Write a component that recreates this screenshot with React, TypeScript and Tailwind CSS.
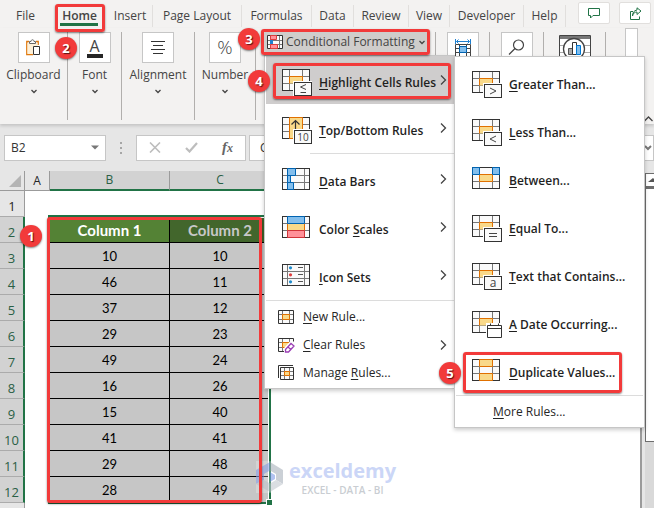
import React from 'react';

const UI_FONT = "font-['Open_Sans','Noto_Sans',sans-serif]";
const CELL_FONT = "font-['Lato','Open_Sans',sans-serif]";

const tabs = [
    { name: 'File', width: 'w-[51px]' },
    { name: 'Home', width: 'w-[57px]', active: true },
    { name: 'Insert', width: 'w-[45px]', line: true },
    { name: 'Page Layout', width: 'w-[89px]', line: true },
    { name: 'Formulas', width: 'w-[70px]', line: true },
    { name: 'Data', width: 'w-[42px]', line: true },
    { name: 'Review', width: 'w-[55px]', line: true },
    { name: 'View', width: 'w-[41px]', line: true },
    { name: 'Developer', width: 'w-[74px]', line: true },
    { name: 'Help', width: 'w-[42px]', line: true },
];

const rows = [
    [10, 10],
    [46, 11],
    [37, 12],
    [29, 23],
    [49, 24],
    [16, 26],
    [15, 40],
    [41, 41],
    [29, 48],
    [28, 49],
];

/* red outline and step number */

const Mark = ({ className }: { className: string }) => (
    <span className={`absolute z-30 border-[3px] border-[#f23a3a] rounded-[3px] shadow-[0_1px_2px_rgba(0,0,0,0.5)] pointer-events-none ${className}`} />
);

const Step = ({ n, className }: { n: number; className: string }) => (
    <span className={`absolute z-40 flex items-center justify-center w-[22px] h-[22px] rounded-full bg-[#f23a3a] text-white text-[13px] leading-none font-bold shadow-[0_1px_2px_rgba(0,0,0,0.5)] [text-shadow:1px_1px_1px_#5a1010] ${className}`}>
        {n}
    </span>
);

/* icons */

const Chevron = () => (
    <svg className="shrink-0" width="8" height="5" viewBox="0 0 8 5" fill="none" stroke="#444" strokeWidth="1.3">
        <path d="M1.5 1L4 3.5L6.5 1" />
    </svg>
);

const ArrowRight = () => (
    <svg width="7" height="10" viewBox="0 0 7 10" fill="none" stroke="#444" strokeWidth="1.3">
        <path d="M1 0.5L5.5 5L1 9.5" />
    </svg>
);

const RuleIcon = ({ kind }: { kind: string }) => {
    const inner = kind === 'bars' || kind === 'scales' || kind === 'sets';
    const x1 = inner ? 5.5 : 7.5;
    const x2 = inner ? 22.5 : 20.5;
    return (
        <svg className="shrink-0 mr-[7px]" width="30" height="27" viewBox="0 0 30 27" fill="none">
            <rect x="0.5" y="0.5" width="27" height="21" fill="#fafafa" />
            <path d={`M${x1} 1V21M${x2} 1V21M1 7.5H27M1 14.5H27`} stroke="#777" />
            <rect x="0.5" y="0.5" width="27" height="21" stroke="#333" />
            {(kind === '≤' || kind === '>' || kind === '<' || kind === '=' || kind === 'a' || kind === 'date' || kind === 'between') && (
                <path d="M7.5 7.5H20.5V14.5H7.5Z" fill="#f9d989" />
            )}
            {(kind === '≤' || kind === '>' || kind === '<' || kind === '=' || kind === 'a' || kind === 'date') && (
                <path d="M7.5 14.5V7.5H20.5V14.5" stroke="#e07000" />
            )}
            {kind === 'between' && (
                <>
                    <path d="M7.5 7.5H20.5V14.5H7.5Z" stroke="#e07000" />
                    <path d="M0.5 0.5H7.5V7.5H0.5ZM20.5 0.5H27.5V7.5H20.5Z" fill="#83beec" stroke="#0063b1" />
                </>
            )}
            {kind === 'top' && (
                <>
                    <path d="M7.5 0.5H20.5V21.5H7.5Z" fill="#f9d989" stroke="#e07000" />
                    <path d="M13.5 13V3.5M9.5 7.5L13.5 3.5L17.5 7.5" stroke="#333" strokeWidth="1.2" />
                </>
            )}
            {kind === 'dup' && (
                <path d="M7.5 0.5H20.5V7.5H7.5ZM7.5 14.5H20.5V21.5H7.5Z" fill="#f9d989" stroke="#e07000" />
            )}
            {kind === 'bars' && (
                <path d="M5.5 0.5H13.5V7.5H5.5ZM5.5 7.5H8.5V14.5H5.5ZM5.5 14.5H11.5V21.5H5.5Z" fill="#83beec" stroke="#0063b1" />
            )}
            {kind === 'scales' && (
                <>
                    <path d="M5.5 7.5H22.5V14.5H5.5Z" fill="#f9d989" stroke="#e07000" />
                    <path d="M5.5 0.5H22.5V7.5H5.5Z" fill="#83beec" stroke="#0063b1" />
                    <path d="M5.5 14.5H22.5V21.5H5.5Z" fill="#ff9199" stroke="#d13438" />
                </>
            )}
            {kind === 'sets' && (
                <>
                    <circle cx="8.5" cy="3.8" r="1.6" fill="#1e8bcd" />
                    <circle cx="8.5" cy="10.8" r="1.6" fill="#e03c3c" />
                    <circle cx="8.5" cy="17.8" r="1.6" fill="#1e8bcd" />
                    <path d="M16 3.5H21M16 10.5H21M16 17.5H21" stroke="#555" />
                </>
            )}
            {(kind === '≤' || kind === '>' || kind === '<' || kind === '=' || kind === 'a' || kind === 'top') && (
                <>
                    <path d="M11 12H30V27H11Z" fill="#fff" />
                    <rect x="12.5" y="13.5" width="17" height="13" fill="#fafafa" stroke="#333" />
                </>
            )}
            {kind === '≤' && <path d="M24 15.5L18.5 18L24 20.5M18.5 23.5H24" stroke="#444" />}
            {kind === '>' && <path d="M18 17L24 20L18 23" stroke="#444" />}
            {kind === '<' && <path d="M24 17L18 20L24 23" stroke="#444" />}
            {kind === '=' && <path d="M17 18.5H25M17 21.5H25" stroke="#444" />}
            {kind === 'a' && <text x="21" y="24" textAnchor="middle" fontSize="12" fontWeight="400" fill="#444">a</text>}
            {kind === 'top' && <text x="21" y="24" textAnchor="middle" fontSize="10" fontWeight="400" fill="#444">10</text>}
            {kind === 'date' && (
                <>
                    <path d="M14 12H30V27H14Z" fill="#fff" />
                    <path d="M15.5 14.5H29.5V26.5H15.5ZM15.5 17.5H29.5M18.5 12.5V15M26.5 12.5V15" stroke="#333" />
                </>
            )}
        </svg>
    );
};

const SmallRuleIcon = ({ kind }: { kind: string }) => (
    <svg className="shrink-0" width="17" height="16" viewBox="0 0 17 16" fill="none">
        {kind === 'manage' ? (
            <>
                <path d="M0.5 13V0.5H15" stroke="#333" />
                <path d="M2.5 2.5H15.5V14.5H2.5Z" fill="#fafafa" stroke="#333" />
                <path d="M6.5 3V14M11.5 3V14M3 6.5H15M3 10.5H15" stroke="#777" />
                <path d="M6.5 6.5H11.5V10.5H6.5Z" fill="#f9d989" stroke="#e07000" />
            </>
        ) : (
            <>
                <path d="M0.5 1.5H15.5V14.5H0.5Z" fill="#fafafa" stroke="#333" />
                <path d="M4.5 2V14M11.5 2V14M1 5.5H15M1 10.5H15" stroke="#777" />
                <path d="M4.5 5.5H11.5V10.5H4.5Z" fill="#f9d989" stroke="#e07000" />
            </>
        )}
        {kind === 'clear' && (
            <>
                <path d="M6 16L6 11L12 4.5H17V16Z" fill="#fff" />
                <path d="M7.5 12.5L13 6.5L16 9L10.5 15H7.5ZM10 10L12.8 12.5" stroke="#9b3fb5" strokeWidth="1.3" />
            </>
        )}
    </svg>
);

/* menus */

type LabelProps = { text: string; hot: number };

const Label = ({ text, hot }: LabelProps) => (
    <span>
        {text.slice(0, hot)}
        <span className="underline underline-offset-2">{text[hot]}</span>
        {text.slice(hot + 1)}
    </span>
);

type ItemProps = { kind: string; text: string; hot?: number; arrow?: boolean; selected?: boolean; children?: React.ReactNode };

const BigItem = ({ kind, text, hot = 0, arrow, selected, children }: ItemProps) => (
    <div className={`relative ${selected ? 'bg-[#cfcdcd]' : ''}`}>
        <button type="button" role="menuitem" className="flex items-center w-full h-12 pl-4 pr-[7px] pt-[5px] text-left text-[12px] leading-4 font-semibold text-[#1f1f1f] whitespace-nowrap">
            <RuleIcon kind={kind} />
            <Label text={text} hot={hot} />
            {arrow && <span className="ml-auto mb-1.5"><ArrowRight /></span>}
        </button>
        {children}
    </div>
);

const SmallItem = ({ kind, text, hot = 0, arrow }: ItemProps) => (
    <button type="button" role="menuitem" className="flex items-center gap-2 w-full h-7 pl-3 pr-[7px] text-left text-[12px] leading-4 text-[#262626] whitespace-nowrap">
        <SmallRuleIcon kind={kind} />
        <Label text={text} hot={hot} />
        {arrow && <span className="ml-auto"><ArrowRight /></span>}
    </button>
);

const RulesMenu = () => (
    <div role="menu" className="absolute top-full left-0 z-20 w-[191px] mt-[3px] pl-px pb-px bg-white border border-[#c6c6c6] shadow-[0_2px_4px_rgba(0,0,0,0.2)]">
        <BigItem kind="≤" text="Highlight Cells Rules" arrow selected>
            <Mark className="left-[7px] right-[3px] top-[7px] h-[36px]" />
            <Step n={4} className="-left-[18px] top-[14px]" />
        </BigItem>
        <BigItem kind="top" text="Top/Bottom Rules" arrow />
        <hr className="ml-11 my-px border-[#dcdcdc]" />
        <BigItem kind="bars" text="Data Bars" arrow />
        <BigItem kind="scales" text="Color Scales" hot={6} arrow />
        <BigItem kind="sets" text="Icon Sets" arrow />
        <hr className="mt-px mb-0.5 border-[#dcdcdc]" />
        <SmallItem kind="new" text="New Rule..." />
        <SmallItem kind="clear" text="Clear Rules" arrow />
        <SmallItem kind="manage" text="Manage Rules..." hot={7} />

        <div role="menu" className="absolute top-0 left-[189px] w-[191px] p-px bg-white border border-[#c6c6c6] shadow-[0_2px_4px_rgba(0,0,0,0.2)]">
            <BigItem kind=">" text="Greater Than..." />
            <BigItem kind="<" text="Less Than..." />
            <BigItem kind="between" text="Between..." />
            <BigItem kind="=" text="Equal To..." />
            <BigItem kind="a" text="Text that Contains..." />
            <BigItem kind="date" text="A Date Occurring..." />
            <BigItem kind="dup" text="Duplicate Values...">
                <Mark className="left-[7px] right-[21px] top-[6px] h-[41px]" />
                <Step n={5} className="-left-[17px] top-[16px]" />
            </BigItem>
            <hr className="my-px border-[#dcdcdc]" />
            <button type="button" role="menuitem" className="flex items-center w-full h-[29px] pl-[37px] text-[12px] leading-4 text-[#262626]">
                <Label text="More Rules..." hot={0} />
            </button>
        </div>
    </div>
);

/* ribbon */

type GroupProps = { name: string; width: string; bare?: boolean; iconOnly?: boolean; children: React.ReactNode };

const Group = ({ name, width, bare, iconOnly, children }: GroupProps) => (
    <button type="button" aria-label={name} className={`flex flex-col items-center shrink-0 h-[88px] border-r border-[#b1afad] text-[12px] leading-4 text-[#444] ${width}`}>
        <span className={`flex items-center justify-center w-8 h-[31px] mb-1 ${bare ? '' : 'bg-white border border-[#c6c6c6]'}`}>{children}</span>
        {!iconOnly && (
            <>
                <span>{name}</span>
                <span className="mt-1.5"><Chevron /></span>
            </>
        )}
    </button>
);

const Ribbon = () => (
    <div className="relative z-10 flex items-start h-24 pt-1 bg-[#f3f2f1] shadow-[0_2px_3px_rgba(0,0,0,0.15)]">
        <Group name="Clipboard" width="w-[68px]">
            <svg width="15" height="17" viewBox="0 0 15 17" fill="none">
                <path d="M3 2.5H0.8V15.5H7M10 2.5H12.2V6" stroke="#e07a10" strokeWidth="1.4" />
                <path d="M1.5 4H11.5V7H7V15H1.5Z" fill="#fdf0d8" />
                <path d="M3.5 4.5V2.5H5C5 0.2 8 0.2 8 2.5H9.5V4.5Z" fill="#fff" stroke="#666" />
                <path d="M7.5 7.5H13.5V15.5H7.5Z" fill="#fff" stroke="#333" />
            </svg>
        </Group>
        <Group name="Font" width="w-[54px]">
            <span className="flex flex-col items-center w-4 border-b-4 border-[#262626] text-[16px] leading-4">A</span>
        </Group>
        <Group name="Alignment" width="w-[73px]">
            <svg width="14" height="14" viewBox="0 0 14 14" stroke="#333">
                <path d="M0 0.5H14M2 4.5H12M0 8.5H14M2 12.5H12" />
            </svg>
        </Group>
        <Group name="Number" width="w-[61px]">
            <span className="text-[19px] leading-none font-light">%</span>
        </Group>
        <div className="shrink-0 w-[180px] h-[88px] pl-2 pr-2 border-r border-[#b1afad]">
            <div className="relative">
                <button type="button" aria-haspopup="menu" className="flex items-center gap-[3px] w-full h-5 pl-[3px] bg-[#cfcdcb] text-[12px] leading-4 text-[#444] whitespace-nowrap">
                    <svg className="shrink-0" width="16" height="15" viewBox="0 0 16 15" fill="none">
                        <path d="M0.5 0.5H15.5V13.5H0.5Z" fill="#fafafa" />
                        <path d="M3.5 1V13M12.5 1V13M1 5.5H15M1 9.5H15" stroke="#777" />
                        <path d="M0.5 0.5H15.5V13.5H0.5Z" stroke="#333" />
                        <path d="M3.5 0.5H9.5V4.5H3.5ZM3.5 9.5H10.5V13.5H3.5Z" fill="#ff9199" stroke="#e03c3c" />
                        <path d="M3 5H6V9H3Z" fill="#1e7fd0" />
                    </svg>
                    <span>Conditional Formatting</span>
                    <Chevron />
                </button>
                <Mark className="-inset-[3px]" />
                <Step n={3} className="-left-[26px] -top-[4px]" />
                <RulesMenu />
            </div>
        </div>
        <Group name="Cells" width="w-[54px]" iconOnly>
            <svg width="16" height="18" viewBox="0 0 16 18" fill="none">
                <path d="M0.5 5.5H15.5V17M0.5 5.5V17M0.5 9.5H15.5M0.5 13.5H15.5M4.5 6V17M11.5 6V17" stroke="#444" />
                <path d="M4.5 7.5H11.5V13.5H4.5Z" fill="#83beec" stroke="#0063b1" />
                <path d="M1.5 2.5H14.5M3.5 0.5L1.5 2.5L3.5 4.5M12.5 0.5L14.5 2.5L12.5 4.5M0.5 0V5M15.5 0V5" stroke="#1e7fd0" />
            </svg>
        </Group>
        <Group name="Editing" width="w-[54px]" iconOnly>
            <svg width="17" height="17" viewBox="0 0 17 17" fill="none" stroke="#444" strokeWidth="1.2">
                <circle cx="10.5" cy="6" r="5" />
                <path d="M7 9.5L1 15.5" />
            </svg>
        </Group>
        <Group name="Analysis" width="w-[62px]" bare iconOnly>
            <svg width="32" height="28" viewBox="0 0 32 28" fill="none">
                <path d="M0.5 1.5H31.5V27H0.5Z" fill="#fff" stroke="#444" />
                <path d="M1 2H31V5H1Z" fill="#777" />
                <path d="M1 11.5H31M1 18.5H31" stroke="#aaa" />
                <circle cx="15" cy="15" r="10.5" fill="#fff" stroke="#444" strokeWidth="1.3" />
                <path d="M9.5 14.5H13.5V20.5H9.5Z" fill="#aaa" stroke="#555" />
                <path d="M13.5 8.5H17.5V20.5H13.5Z" fill="#fff" stroke="#333" />
                <path d="M17.5 11.5H21.5V20.5H17.5Z" fill="#83beec" stroke="#0078d4" />
            </svg>
        </Group>
        <span className="w-[13px] h-8 ml-[19px] -mt-1 bg-white border border-[#c6c6c6]" />
        <button type="button" aria-label="Collapse ribbon" className="self-end ml-auto mr-px pb-0.5">
            <svg width="9" height="6" viewBox="0 0 9 6" fill="none" stroke="#444" strokeWidth="1.3">
                <path d="M0.5 5L4.5 1L8.5 5" />
            </svg>
        </button>
    </div>
);

const TabBar = () => (
    <div className="flex items-start h-7 pt-0.5 bg-[#f3f2f1]">
        {tabs.map((tab) => (
            <div key={tab.name} className={`relative shrink-0 h-[22px] ${tab.width}`}>
                <button
                    type="button"
                    className={`w-full h-[22px] text-[12px] leading-[22px] text-[#444] whitespace-nowrap ${tab.line ? 'border-r border-[#e1dfdd]' : ''} ${tab.active ? 'font-semibold' : ''}`}
                >
                    {tab.name}
                </button>
                {tab.active && (
                    <>
                        <span className="absolute left-[9px] right-[10px] top-[21px] h-[3px] bg-[#217346]" />
                        <Mark className="left-1 right-[3px] top-[2px] h-[28px]" />
                        <Step n={2} className="left-1 top-[35px]" />
                    </>
                )}
            </div>
        ))}
        <div className="flex gap-[9px] ml-auto mr-[3px]">
            <button type="button" aria-label="Comments" className="flex items-center justify-center w-8 h-[22px] bg-white border border-[#e1dfdd] rounded-[2px]">
                <svg width="12" height="11" viewBox="0 0 12 11" fill="none" stroke="#217346">
                    <path d="M0.5 0.5H11.5V7.5H5L2.5 10V7.5H0.5Z" />
                </svg>
            </button>
            <button type="button" aria-label="Share" className="flex items-center justify-center w-8 h-[22px] bg-white border border-[#e1dfdd] rounded-[2px]">
                <svg width="13" height="13" viewBox="0 0 13 13" fill="none" stroke="#217346">
                    <path d="M4 4.5H1.5V12.5H10.5V9.5M3.5 9C4 6 6 5 8 5V7.5L12 4L8 0.8V3C5 3.5 3.5 5.5 3.5 9Z" />
                </svg>
            </button>
        </div>
    </div>
);

const FormulaBar = () => (
    <div className="flex items-center shrink-0 h-[47px] pl-1 bg-[#e6e6e6]">
        <div className="flex items-center w-[102px] h-[26px] pl-[6px] pr-1.5 bg-white border border-[#c6c6c6]">
            <input aria-label="Name Box" defaultValue="B2" className="w-0 grow text-[12px] text-[#333] outline-none" />
            <svg width="8" height="5" viewBox="0 0 8 5" fill="#777"><path d="M0 0.5H8L4 4.5Z" /></svg>
        </div>
        <svg className="mx-[13px]" width="4" height="12" viewBox="0 0 4 12" fill="#a6a6a6">
            <path d="M1 0H3V2H1ZM1 5H3V7H1ZM1 10H3V12H1Z" />
        </svg>
        <div className="flex items-center justify-between w-[110px] h-[26px] px-3 bg-white border border-[#c6c6c6]">
            <button type="button" aria-label="Cancel">
                <svg width="12" height="11" viewBox="0 0 12 11" stroke="#bdbdbd" strokeWidth="1.6"><path d="M1 0.5L11 10.5M11 0.5L1 10.5" /></svg>
            </button>
            <button type="button" aria-label="Enter">
                <svg width="13" height="11" viewBox="0 0 13 11" fill="none" stroke="#bdbdbd" strokeWidth="2.2"><path d="M1 6L4.5 9.5L12 1" /></svg>
            </button>
            <button type="button" className="font-['Liberation_Serif',serif] italic font-bold text-[15px] leading-4 text-[#666]">
                f<span className="text-[12px]">x</span>
            </button>
        </div>
        <div className="flex items-center grow h-[26px] ml-[3px] pr-px bg-white border border-[#c6c6c6]">
            <input aria-label="Formula Bar" defaultValue="Column 1" className="w-0 grow pl-[10px] text-[12px] text-[#333] outline-none" />
            <svg width="8" height="6" viewBox="0 0 8 6" fill="none" stroke="#777" strokeWidth="2"><path d="M1 1L4 4L7 1" /></svg>
        </div>
    </div>
);

/* sheet */

const RowHead = ({ n, selected = true }: { n?: number; selected?: boolean }) => (
    <th className={`p-0 pb-0.5 align-bottom border-b border-b-[#ababab] text-[13px] leading-4 font-normal ${selected ? 'bg-[#d2d2d2] border-r-2 border-r-[#217346] text-[#2a6045]' : 'bg-[#e6e6e6] border-r border-r-[#9b9b9b] text-[#262626]'}`}>
        {n}
    </th>
);

const cell = 'p-0 align-middle text-center border-b border-r border-black';

const Sheet = () => (
    <div className="flex grow min-h-0 overflow-hidden bg-[#e6e6e6]">
        <div className="relative grow bg-white border-r-2 border-[#9b9b9b] overflow-hidden">
            <table className="table-fixed w-full border-separate border-spacing-0">
                <colgroup>
                    <col className="w-[25px]" />
                    <col className="w-[25px]" />
                    <col className="w-[120px]" />
                    <col className="w-[101px]" />
                    <col />
                </colgroup>
                <thead>
                    <tr className="h-5 text-[12px] leading-4">
                        <th className="p-0 bg-[#e6e6e6] border-b border-r border-[#9b9b9b]">
                            <svg className="ml-[9px]" width="12" height="12" viewBox="0 0 12 12" fill="#b4b4b4"><path d="M12 0V12H0Z" /></svg>
                        </th>
                        <th className="p-0 font-normal text-[#262626] bg-[#e6e6e6] border-b border-r border-[#9b9b9b]">A</th>
                        <th className="p-0 font-normal text-[#2a6045] bg-[#d2d2d2] border-b-2 border-b-[#217346] border-r border-r-[#9b9b9b]">B</th>
                        <th className="p-0 font-normal text-[#2a6045] bg-[#d2d2d2] border-b-2 border-b-[#217346] border-r border-r-[#9b9b9b]">C</th>
                        <th className="p-0 bg-[#e6e6e6] border-b border-[#9b9b9b]" />
                    </tr>
                </thead>
                <tbody>
                    <tr className="h-[26px]">
                        <RowHead n={1} selected={false} />
                        <td colSpan={4} />
                    </tr>
                    <tr className="h-[26px] leading-5">
                        <RowHead n={2} />
                        <td />
                        <td className={`${cell} ${CELL_FONT} bg-[#548235] text-[15px] font-bold text-white`}>Column 1</td>
                        <td className={`${cell} ${CELL_FONT} bg-[#42662c] text-[15px] font-bold text-[#c8c8c8]`}>Column 2</td>
                        <td />
                    </tr>
                    {rows.map(([b, c], i) => (
                        <tr key={i} className="h-[26px] text-[13px] leading-5 text-black">
                            <RowHead n={i + 3} />
                            <td />
                            <td className={`${cell} ${CELL_FONT} bg-[#c6c6c6]`}>{b}</td>
                            <td className={`${cell} ${CELL_FONT} bg-[#c6c6c6]`}>{c}</td>
                            <td />
                        </tr>
                    ))}
                    <tr className="h-[26px]">
                        <RowHead selected={false} />
                        <td colSpan={4} />
                    </tr>
                </tbody>
            </table>

            {/* selection frame */}
            <div className="absolute left-12 top-[44px] w-[223px] h-[289px] border-2 border-[#217346]">
                <span className="absolute inset-0 border-r border-t border-white" />
                <span className="absolute -right-[4px] -bottom-[4px] w-[7px] h-[7px] bg-[#217346] border border-white" />
            </div>
            <Mark className="left-[47px] top-[46px] w-[215px] h-[286px]" />
            <Step n={1} className="left-5 top-[54px]" />

            {/* watermark */}
            <div className="absolute left-64 top-[287px] flex items-center gap-[5px] opacity-60">
                <svg width="28" height="32" viewBox="0 0 28 32">
                    <path d="M0 0H28V32H0Z" fill="#fff" opacity="0.4" />
                    <path d="M14 1L0 9V23L8 19V13L14 9.5Z" fill="#8ea4e8" />
                    <path d="M14 1L27 9V23L20 19V13L14 9.5Z" fill="#a9b1bb" />
                    <path d="M0 23L14 31L27 23L20 19L14 22.5L8 19Z" fill="#c3c9d0" />
                    <path d="M14 11L19 14V18L14 21Z" fill="#7f9be8" />
                </svg>
                <div className="flex flex-col items-center">
                    <span className="text-[20px] leading-[26px] font-bold text-[#a9bbf2]">exceldemy</span>
                    <span className="text-[10px] leading-3 font-semibold text-[#a6adb5]">EXCEL - DATA - BI</span>
                </div>
            </div>
        </div>

        {/* vertical scroll bar */}
        <div className="flex flex-col shrink-0 w-[9px] ml-[3px] mt-0.5 bg-[#d9d9d9]">
            <button type="button" aria-label="Scroll up" className="flex items-center justify-end h-[14px] bg-white border border-r-0 border-[#6d6d6d]">
                <svg width="6" height="4" viewBox="0 0 6 4" fill="#555"><path d="M0 4L5 0L6 1V4Z" /></svg>
            </button>
            <div className="h-[255px] bg-white border border-t-2 border-r-0 border-[#6d6d6d]" />
        </div>
    </div>
);

const App = () => {
    return (
        <div className={`flex flex-col h-screen overflow-hidden bg-[#e6e6e6] ${UI_FONT}`}>
            <div className="relative z-10 shrink-0">
                <TabBar />
                <Ribbon />
            </div>
            <FormulaBar />
            <Sheet />
        </div>
    );
};

export default App;
